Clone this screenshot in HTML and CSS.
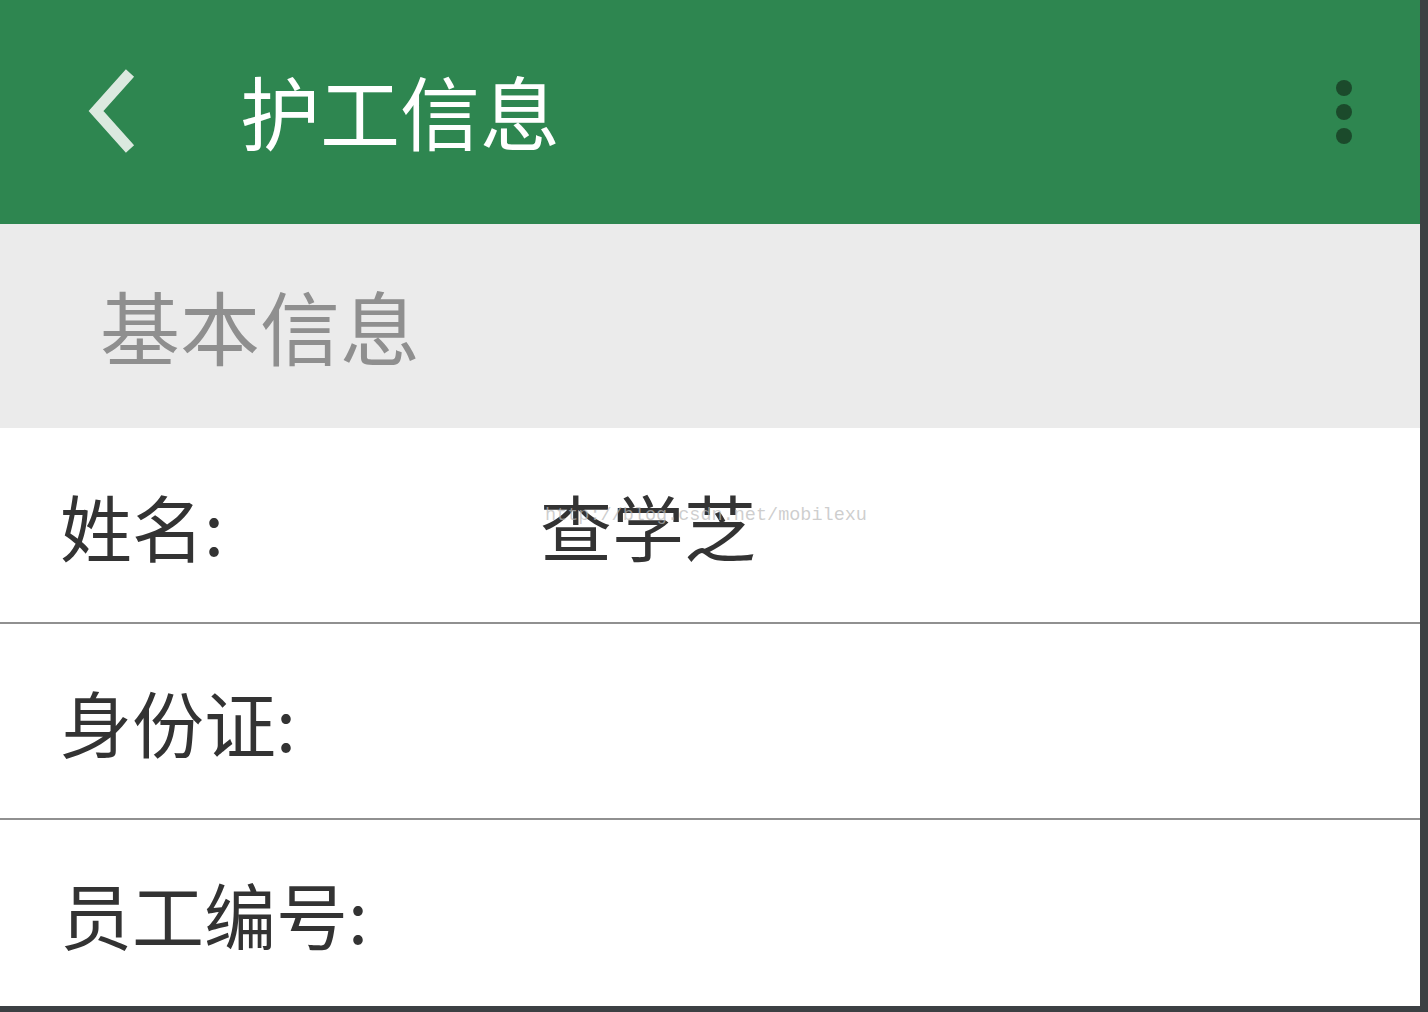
FILE: index.html
```html
<!DOCTYPE html>
<html lang="zh-CN">
<head>
<meta charset="utf-8">
<title>护工信息</title>
<link rel="stylesheet" href="styles.css">
</head>
<body>
<div class="frame">
  <div class="screen">
    <header class="appbar">
      <svg class="back" width="60" height="100" viewBox="0 0 60 100" aria-hidden="true">
        <polyline points="48,8 14,46 48,84" fill="none" stroke="#dbe9df" stroke-width="11" stroke-linecap="butt" stroke-linejoin="miter"/>
      </svg>
      <h1 class="title">护工信息</h1>
      <div class="more" aria-hidden="true">
        <span class="dot"></span><span class="dot"></span><span class="dot"></span>
      </div>
    </header>
    <section class="section-head">基本信息</section>
    <div class="row">
      <span class="label">姓名:</span>
      <span class="value">查学芝</span>
      <span class="watermark">http://blog.csdn.net/mobilexu</span>
    </div>
    <div class="row">
      <span class="label">身份证:</span>
      <span class="value"></span>
    </div>
    <div class="row last">
      <span class="label">员工编号:</span>
      <span class="value"></span>
    </div>
  </div>
</div>
</body>
</html>
```

FILE: styles.css
```css
html, body {
  margin: 0;
  padding: 0;
  width: 1428px;
  height: 1012px;
  overflow: hidden;
  background: #3c4043;
  font-family: "Noto Sans CJK SC", "Noto Sans", sans-serif;
}
.frame {
  width: 1428px;
  height: 1012px;
  display: flex;
  flex-direction: column;
}
.screen {
  width: 1420px;
  height: 1006px;
  background: #ffffff;
  display: flex;
  flex-direction: column;
}
.appbar {
  height: 224px;
  flex: none;
  background: #2e8650;
  display: flex;
  align-items: center;
}
.back {
  margin-left: 82px;
  margin-top: 6px;
  flex: none;
}
.title {
  margin: 0 0 0 98px;
  padding-bottom: 6px;
  font-size: 80px;
  font-weight: 400;
  color: #ffffff;
  line-height: 1;
  flex: 1;
}
.more {
  display: flex;
  flex-direction: column;
  gap: 8px;
  margin-right: 68px;
}
.dot {
  width: 16px;
  height: 16px;
  border-radius: 50%;
  background: #1b4a2b;
}
.section-head {
  height: 204px;
  flex: none;
  background: #ebebeb;
  color: #8f8f8f;
  font-size: 80px;
  line-height: 1;
  display: flex;
  align-items: center;
  padding-left: 100px;
  padding-bottom: 4px;
  box-sizing: border-box;
}
.row {
  height: 194px;
  flex: none;
  display: flex;
  align-items: center;
  border-bottom: 2px solid #909090;
  padding-left: 60px;
  font-size: 72px;
  line-height: 1;
  color: #333333;
  position: relative;
}
.row.last {
  border-bottom: none;
  flex: 1;
}
.label {
  width: 480px;
  flex: none;
}
.value {
  flex: 1;
}
.watermark {
  position: absolute;
  left: 545px;
  top: 79px;
  font-family: "Liberation Mono", "DejaVu Sans Mono", monospace;
  font-size: 18.5px;
  color: rgba(185, 185, 185, 0.7);
  line-height: 1;
}
```
